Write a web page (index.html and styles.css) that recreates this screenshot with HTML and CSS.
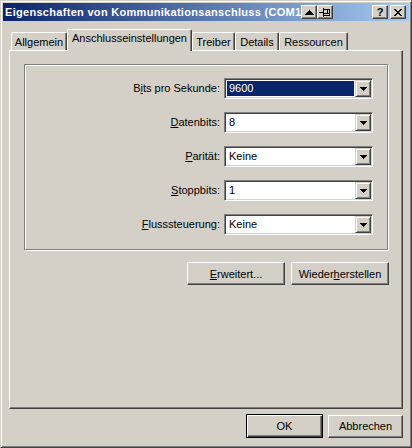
FILE: index.html
```html
<!DOCTYPE html>
<html lang="de">
<head>
<meta charset="utf-8">
<title>Eigenschaften von Kommunikationsanschluss (COM1)</title>
<link rel="stylesheet" href="styles.css">
</head>
<body>
<div class="window">
  <div class="titlebar">
    <span class="title">Eigenschaften von Kommunikationsanschluss (COM1)</span>
    <div class="tb-group">
      <div class="tb">
        <svg width="9" height="5" viewBox="0 0 9 5" shape-rendering="crispEdges"><rect x="4" y="0" width="1" height="1"/><rect x="3" y="1" width="3" height="1"/><rect x="2" y="2" width="5" height="1"/><rect x="1" y="3" width="7" height="1"/><rect x="0" y="4" width="9" height="1"/></svg>
      </div>
      <div class="tb">
        <svg width="12" height="10" viewBox="0 0 12 10" shape-rendering="crispEdges"><rect x="0" y="5" width="4" height="1"/><rect x="4" y="1" width="1" height="9"/><rect x="5" y="2" width="6" height="1"/><rect x="5" y="8" width="6" height="1"/><rect x="10" y="2" width="1" height="7"/><rect x="5" y="6" width="5" height="1"/><rect x="8" y="3" width="1" height="3"/></svg>
      </div>
    </div>
    <div class="tb help"><span>?</span></div>
    <div class="tb close">
      <svg width="8" height="7" viewBox="0 0 8 7" shape-rendering="crispEdges"><rect x="0" y="0" width="2" height="1"/><rect x="6" y="0" width="2" height="1"/><rect x="1" y="1" width="2" height="1"/><rect x="5" y="1" width="2" height="1"/><rect x="2" y="2" width="4" height="1"/><rect x="3" y="3" width="2" height="1"/><rect x="2" y="4" width="4" height="1"/><rect x="1" y="5" width="2" height="1"/><rect x="5" y="5" width="2" height="1"/><rect x="0" y="6" width="2" height="1"/><rect x="6" y="6" width="2" height="1"/></svg>
    </div>
  </div>

  <div class="tabs">
    <div class="tab w-allg">Allgemein</div>
    <div class="tab selected w-ansch">Anschlusseinstellungen</div>
    <div class="tab w-treib">Treiber</div>
    <div class="tab w-det">Details</div>
    <div class="tab w-res">Ressourcen</div>
  </div>

  <div class="panel">
    <div class="group">
      <div class="form">
        <label class="lbl">B<u>i</u>ts pro Sekunde:</label>
        <div class="combo focused"><span class="value">9600</span><span class="drop"><svg width="7" height="4" viewBox="0 0 7 4" shape-rendering="crispEdges"><rect x="0" y="0" width="7" height="1"/><rect x="1" y="1" width="5" height="1"/><rect x="2" y="2" width="3" height="1"/><rect x="3" y="3" width="1" height="1"/></svg></span></div>

        <label class="lbl"><u>D</u>atenbits:</label>
        <div class="combo"><span class="value">8</span><span class="drop"><svg width="7" height="4" viewBox="0 0 7 4" shape-rendering="crispEdges"><rect x="0" y="0" width="7" height="1"/><rect x="1" y="1" width="5" height="1"/><rect x="2" y="2" width="3" height="1"/><rect x="3" y="3" width="1" height="1"/></svg></span></div>

        <label class="lbl"><u>P</u>arität:</label>
        <div class="combo"><span class="value">Keine</span><span class="drop"><svg width="7" height="4" viewBox="0 0 7 4" shape-rendering="crispEdges"><rect x="0" y="0" width="7" height="1"/><rect x="1" y="1" width="5" height="1"/><rect x="2" y="2" width="3" height="1"/><rect x="3" y="3" width="1" height="1"/></svg></span></div>

        <label class="lbl"><u>S</u>toppbits:</label>
        <div class="combo"><span class="value">1</span><span class="drop"><svg width="7" height="4" viewBox="0 0 7 4" shape-rendering="crispEdges"><rect x="0" y="0" width="7" height="1"/><rect x="1" y="1" width="5" height="1"/><rect x="2" y="2" width="3" height="1"/><rect x="3" y="3" width="1" height="1"/></svg></span></div>

        <label class="lbl"><u>F</u>lusssteuerung:</label>
        <div class="combo"><span class="value">Keine</span><span class="drop"><svg width="7" height="4" viewBox="0 0 7 4" shape-rendering="crispEdges"><rect x="0" y="0" width="7" height="1"/><rect x="1" y="1" width="5" height="1"/><rect x="2" y="2" width="3" height="1"/><rect x="3" y="3" width="1" height="1"/></svg></span></div>
      </div>
    </div>
    <div class="actions">
      <div class="btn wide"><span><u>E</u>rweitert...</span></div>
      <div class="btn wide"><span>Wieder<u>h</u>erstellen</span></div>
    </div>
  </div>

  <div class="footer">
    <div class="btn default ok">OK</div>
    <div class="btn cancel">Abbrechen</div>
  </div>
</div>
</body>
</html>
```

FILE: styles.css
```css
html, body {
  margin: 0;
  padding: 0;
  background: #D4D0C8;
}

body {
  font-family: "Liberation Sans", Arial, sans-serif;
  font-size: 11px;
  color: #000;
}

u {
  text-decoration: underline;
  text-underline-offset: 1px;
}

.window {
  box-sizing: border-box;
  width: 412px;
  height: 448px;
  background: #D4D0C8;
  border: 1px solid;
  border-color: #D4D0C8 #404040 #404040 #D4D0C8;
  box-shadow: inset 1px 1px 0 #fff, inset -1px -1px 0 #808080;
  padding: 2px;
  display: flex;
  flex-direction: column;
}

/* title bar */
.titlebar {
  height: 18px;
  flex: none;
  display: flex;
  align-items: center;
  background: linear-gradient(to right, #0A246A, #A6CAF0);
  padding-right: 3px;
}

.title {
  flex: 1;
  min-width: 0;
  overflow: hidden;
  white-space: nowrap;
  color: #fff;
  font-weight: bold;
  font-size: 11px;
  letter-spacing: 0.3px;
  padding-left: 2px;
  line-height: 18px;
}

.tb-group {
  display: flex;
  margin-right: 39px;
}

.tb {
  box-sizing: border-box;
  width: 16px;
  height: 14px;
  background: #D4D0C8;
  border: 1px solid;
  border-color: #fff #404040 #404040 #fff;
  box-shadow: inset -1px -1px 0 #808080;
  display: flex;
  align-items: center;
  justify-content: center;
  flex: none;
}

.tb svg {
  fill: #000;
  display: block;
}

.tb.help {
  margin-right: 2px;
  font-weight: bold;
  font-size: 11px;
  line-height: 12px;
}

.tb.help span {
  display: block;
  margin-top: -1px;
}

/* tabs */
.tabs {
  flex: none;
  display: flex;
  align-items: flex-end;
  height: 21px;
  margin-top: 8px;
  padding-left: 8px;
}

.tab {
  box-sizing: border-box;
  height: 18px;
  border-top: 1px solid #fff;
  border-left: 1px solid #fff;
  border-right: 1px solid #404040;
  box-shadow: inset -1px 0 0 #808080;
  border-top-left-radius: 2px;
  border-top-right-radius: 2px;
  background: #D4D0C8;
  text-align: center;
  line-height: 16px;
  padding-top: 1px;
  white-space: nowrap;
}

.tab.selected {
  height: 22px;
  margin-bottom: -1px;
  padding-top: 0;
  line-height: 16px;
  position: relative;
  z-index: 1;
}

.w-allg { width: 56px; }
.w-ansch { width: 125px; }
.w-treib { width: 43px; }
.w-det { width: 44px; }
.w-res { width: 69px; }

/* panel */
.panel {
  box-sizing: border-box;
  flex: none;
  width: 394px;
  height: 359px;
  margin-left: 6px;
  border: 1px solid;
  border-color: #fff #404040 #404040 #fff;
  box-shadow: inset -1px -1px 0 #808080;
  padding: 13px 0 0 14px;
}

.group {
  box-sizing: border-box;
  width: 364px;
  height: 186px;
  border: 1px solid #808080;
  box-shadow: inset 1px 1px 0 #fff, 1px 1px 0 #fff;
  padding-top: 13px;
}

.form {
  display: grid;
  grid-template-columns: 195px 149px;
  column-gap: 4px;
  row-gap: 13px;
}

.lbl {
  text-align: right;
  line-height: 21px;
  white-space: nowrap;
}

.combo {
  box-sizing: border-box;
  height: 21px;
  border: 1px solid;
  border-color: #808080 #fff #fff #808080;
  box-shadow: inset 1px 1px 0 #404040, inset -1px -1px 0 #D4D0C8;
  background: #fff;
  padding: 1px;
  display: flex;
}

.combo .value {
  flex: 1;
  line-height: 17px;
  padding-left: 3px;
  white-space: nowrap;
}

.combo.focused .value {
  margin: 1px;
  padding-left: 2px;
  line-height: 15px;
  background: #0A246A;
  color: #fff;
}

.drop {
  box-sizing: border-box;
  width: 16px;
  height: 17px;
  flex: none;
  background: #D4D0C8;
  border: 1px solid;
  border-color: #D4D0C8 #404040 #404040 #D4D0C8;
  box-shadow: inset 1px 1px 0 #fff, inset -1px -1px 0 #808080;
  display: flex;
  align-items: center;
  justify-content: center;
}

.drop svg {
  fill: #000;
  display: block;
}

.actions {
  width: 365px;
  display: flex;
  justify-content: flex-end;
  gap: 6px;
  margin-top: 12px;
}

/* buttons */
.btn {
  box-sizing: border-box;
  height: 23px;
  background: #D4D0C8;
  border: 1px solid;
  border-color: #fff #404040 #404040 #fff;
  box-shadow: inset -1px -1px 0 #808080;
  display: flex;
  align-items: center;
  justify-content: center;
  white-space: nowrap;
  flex: none;
}

.btn.wide { width: 98px; }

.btn.default {
  border-color: #000;
  box-shadow: inset 1px 1px 0 #fff, inset -1px -1px 0 #404040, inset -2px -2px 0 #808080;
}

.footer {
  flex: none;
  display: flex;
  justify-content: flex-end;
  align-items: center;
  gap: 5px;
  margin-top: 5px;
  padding-right: 6px;
}

.btn.ok { width: 77px; height: 24px; }
.btn.cancel { width: 75px; }
```
